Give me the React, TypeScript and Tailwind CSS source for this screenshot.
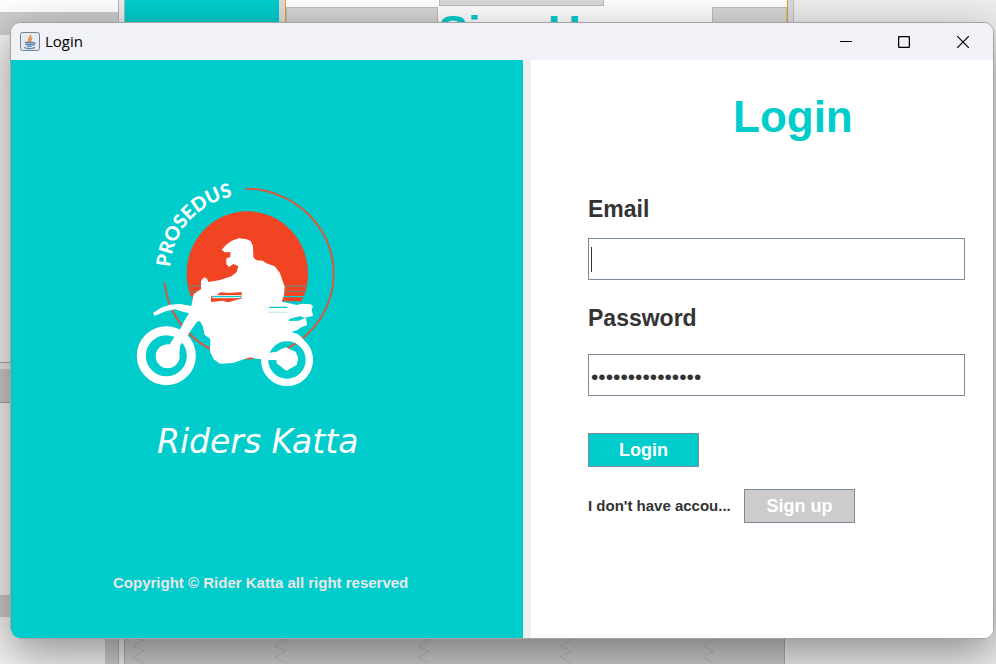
import { useState } from "react";

function Backdrop() {
  return (
    <div aria-hidden="true" className="absolute inset-0 overflow-hidden bg-[#f4f4f4]">
      <div className="absolute top-0 left-0 h-3 w-[118px] bg-white" />
      <div className="absolute top-3 left-0 h-[23px] w-[118px] bg-[#cdcdcd]" />
      <div className="absolute top-[362px] left-0 h-[41px] w-4 border-y border-[#a8a8a8] bg-[#cdcdcd]" />
      <div className="absolute top-[363px] left-0 h-1.5 w-4 bg-[#ededed]" />
      <div className="absolute top-[595px] left-0 h-[22px] w-4 bg-[#cdcdcd]" />

      <div className="absolute inset-y-0 left-[118px] w-[7px] border-x border-[#b4b4b4] bg-[#ececec]" />
      <div className="absolute top-0 left-[125px] h-10 w-[154px] bg-[#00cccc]" />
      <div className="absolute top-0 left-[279px] h-10 w-[7px] border-r border-[#f0a010] bg-[#dcdcdc]" />
      <div className="absolute top-0 left-[286px] h-10 w-[501px] bg-white" />
      <div className="absolute top-[7px] left-[286px] h-10 w-[152px] border border-[#bdbdbd] bg-[#d6d6d6]" />
      <div className="absolute -top-2 left-[439px] h-[14px] w-[165px] border border-[#bdbdbd] bg-[#dadada]" />
      <div className="absolute top-[7px] left-[712px] h-10 w-[75px] border border-[#bdbdbd] bg-[#d8d8d8]" />
      <div className="absolute top-[9px] left-[438px] text-[45px] leading-none font-bold text-[#00cccc]">Sign Up</div>
      <div className="absolute inset-y-0 right-0 left-[787px] bg-[#eeeeee]" />
      <div className="absolute top-0 left-[787px] h-10 w-[7px] border-x border-l-[#f0a010] border-r-[#c0c0c0] bg-[#dcdcdc]" />

      <div className="absolute bottom-0 left-[105px] h-10 w-[14px] border-r border-[#b0b0b0] bg-[#cccccc]" />
      <div className="absolute bottom-0 left-[124px] h-10 w-[661px] border-x border-[#aaaaaa] bg-[#cccccc]">
        <svg className="h-10 w-full" fill="none" stroke="#b9b9b9">
          {[8, 150, 293, 435, 578].map((x) => (
            <path key={x} d={`M${x + 6} 8L${x} 11L${x + 11} 16L${x} 22L${x + 11} 27L${x} 33L${x + 11} 39`} />
          ))}
        </svg>
      </div>
    </div>
  );
}

function JavaIcon() {
  return (
    <svg className="h-5 w-5" viewBox="0 0 20 20" fill="none" aria-hidden="true">
      <rect x="0.5" y="0.5" width="19" height="18" rx="2" fill="#e6eaef" stroke="#6f8597" />
      <path d="M10.500 3C12 5 7 6.500 9 10M12 6C9.500 7.500 11.500 8.500 10 10" stroke="#ee8a3c" strokeWidth="1.600" />
      <path d="M5 10.500H13.500M5.500 12.500H13M7 14.300H11.500M13 10.500C16 10.500 15 13 12.500 13M4 15.500C7 16.800 12 16.800 15 15.300" stroke="#5b85a8" strokeWidth="1.300" />
    </svg>
  );
}

function TitleBar() {
  return (
    <header className="flex h-[37px] items-center bg-[#f1f2f7] pl-[9px]">
      <JavaIcon />
      <span className="ml-[5px] pb-0.5 font-['Open_Sans','Noto_Sans',sans-serif] text-[15px] leading-5 text-black">Login</span>
      <div className="ml-auto flex h-full">
        <button type="button" aria-label="Minimize" className="flex w-[58px] items-center justify-center">
          <svg className="h-3 w-3" viewBox="0 0 12 12" stroke="#000"><path d="M0 5.500H12" /></svg>
        </button>
        <button type="button" aria-label="Maximize" className="flex w-[58px] items-center justify-center">
          <svg className="h-3 w-3" viewBox="0 0 12 12" fill="none" stroke="#000" strokeWidth="1.300"><rect x="0.600" y="0.600" width="10.800" height="10.800" rx="1" /></svg>
        </button>
        <button type="button" aria-label="Close" className="flex w-[60px] items-center justify-center">
          <svg className="h-3 w-3" viewBox="0 0 12 12" stroke="#000" strokeWidth="1.200"><path d="M0 0L12 12M12 0L0 12" /></svg>
        </button>
      </div>
    </header>
  );
}

function RiderLogo() {
  return (
    <svg className="h-[230px] w-[240px]" viewBox="0 0 720 690" role="img" aria-label="Prosedus rider">
      <defs>
        <path id="badge-arc" d="M150 292A232 232 0 0 1 400 76" />
      </defs>
      <g fill="none" stroke="#d9583f" strokeWidth="6">
        <path d="M376 56C520 56 641 170 641 308C641 405 590 490 500 537" />
        <path d="M134 338A255 255 0 0 0 400 565" />
      </g>
      <path d="M219 394A182 182 0 0 1 200 310A182 186 0 0 1 564 310A182 182 0 0 1 545 394Z" fill="#f04423" />
      <g stroke="#8a7a68" strokeWidth="4">
        <path d="M204 348H562M206 364H560" />
      </g>
      <path d="M208 380H558" stroke="#00cccc" strokeWidth="4" />
      <g fill="none" stroke="#fff">
        <circle cx="139" cy="557" r="75" strokeWidth="27" />
        <circle cx="501" cy="570" r="67" strokeWidth="22" />
      </g>
      <g fill="#fff">
        <circle cx="143" cy="559" r="36" />
        <path d="M468 546L484 537L498 532L512 539L527 545L535 565L530 585L515 593L499 602L485 592L470 580Z" />
        <path d="M305 239L318 225L334 213L356 205L378 207L392 213L399 228L400 262L410 271L428 272L439 280L464 289L480 309L488 333L494 350L492 376L485 395L508 400L530 405L548 401L573 403L579 410L575 418L579 438L553 443L540 439L509 446L506 453L536 452L558 443L561 466L545 471L532 480L515 486L535 493L552 510L535 511L506 499L480 498L455 510L441 535L447 549L467 545L474 570L449 570L410 566L390 562L371 568L340 579L300 581L281 568L270 545L271 507L254 494L248 468L240 453L231 455L212 482L199 502L181 526L178 550L140 550L148 526L159 507L177 485L191 456L207 430L191 426L165 418L137 424L104 438L99 429L123 413L150 404L181 402L214 408L221 372L243 358L243 332L252 322L261 326L265 336L300 330L334 319L350 306L355 289L340 282L327 291L319 282L319 265L331 261L331 246L314 247Z" />
      </g>
      <path d="M273 378L290 375L302 367L328 369L365 366V386L345 391L326 397L306 392L273 396Z" fill="#f04423" />
      <path d="M277 380H364" stroke="#fff" strokeWidth="9" />
      <path d="M277 380H364M447 412H502" stroke="#00cccc" strokeWidth="4" />
      <path d="M443 427H501" stroke="#ccecec" strokeWidth="4" />
      <text fill="#fff" className="font-['Lato',sans-serif] text-[58px] font-black">
        <textPath href="#badge-arc">PROSEDUS</textPath>
      </text>
    </svg>
  );
}

function BrandPanel() {
  return (
    <section className="flex flex-col bg-[#00cccc]">
      <div className="mt-[110px] ml-[109px]">
        <RiderLogo />
      </div>
      <p className="mt-[22px] ml-[146px] font-['DejaVu_Sans',sans-serif] text-[33px] leading-10 text-white italic">Riders Katta</p>
      <p className="mt-[111px] ml-[102px] text-[15px] leading-5 font-bold text-[#e8e8e8]">
        Copyright © Rider Katta all right reserved
      </p>
    </section>
  );
}

const field = "block h-[42px] w-full border border-[#7a8a99] bg-white px-0.5 text-[21px] text-[#333333] outline-none";
const action = "h-[34px] w-[111px] border border-[#7a8a99] text-[18px] leading-5 font-bold text-white";

function LoginForm() {
  const [email, setEmail] = useState("");
  const [password, setPassword] = useState("ridersonthehill");
  return (
    <form className="bg-white pt-[31px] pr-7 pb-10 pl-[57px] text-[#333333]" onSubmit={(e) => e.preventDefault()}>
      <h1 className="ml-[145px] text-[44px] leading-[52px] font-bold text-[#00cccc]">Login</h1>
      <label htmlFor="email" className="mt-[52px] block text-[23px] leading-7 font-bold">Email</label>
      <div className="relative mt-[15px]">
        <input id="email" type="email" value={email} onChange={(e) => setEmail(e.target.value)} className={field} />
        <span className="absolute top-[9px] left-[3px] h-[25px] w-px bg-[#333333]" />
      </div>
      <label htmlFor="password" className="mt-6 block text-[23px] leading-7 font-bold">Password</label>
      <input id="password" type="password" value={password} onChange={(e) => setPassword(e.target.value)} className={`${field} mt-[22px] pt-[3px]`} />
      <button type="submit" className={`${action} mt-[37px] block bg-[#00cccc]`}>Login</button>
      <div className="mt-[22px] flex items-center">
        <span className="w-[156px] text-[15px] leading-5 font-bold whitespace-nowrap">I don't have accou...</span>
        <button type="button" className={`${action} bg-[#cccccc]`}>Sign up</button>
      </div>
    </form>
  );
}

export default function App() {
  return (
    <main className="relative flex min-h-screen flex-col pt-[22px] pr-0.5 pb-[25px] pl-[10px] font-['Liberation_Sans',Arial,sans-serif]">
      <Backdrop />
      <div className="relative flex flex-1 flex-col overflow-hidden rounded-[10px] border border-[#a3a3a3] shadow-[0_14px_46px_rgba(0,0,0,0.42)]">
        <TitleBar />
        <div className="grid flex-1 grid-cols-[512fr_8px_462fr] bg-white">
          <BrandPanel />
          <div className="bg-[#eeeeee]" />
          <LoginForm />
        </div>
      </div>
    </main>
  );
}
